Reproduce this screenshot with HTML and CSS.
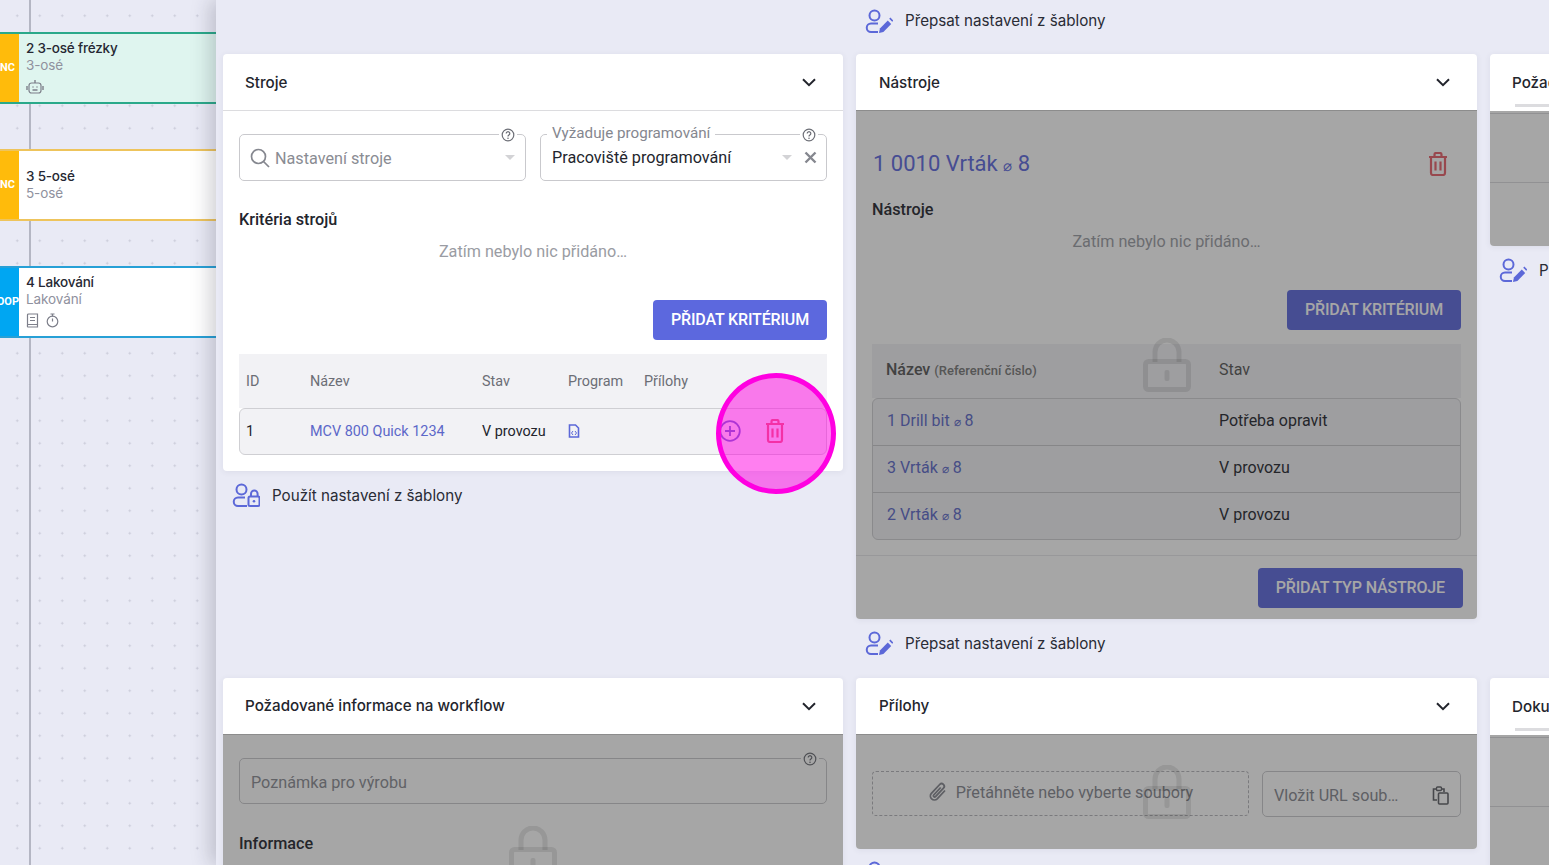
FILE: index.html
```html
<!DOCTYPE html>
<html lang="cs">
<head>
<meta charset="utf-8">
<title>Šablona</title>
<link rel="stylesheet" href="styles.css">
</head>
<body>
<svg class="defs" width="0" height="0" aria-hidden="true">
  <symbol id="i-edit" viewBox="0 0 28 24"><circle cx="9.500" cy="6.500" r="5" fill="none" stroke="currentColor" stroke-width="2"/><path d="M13 14.500H6a4.200 4.200 0 0 0 0 8.500h7" fill="none" stroke="currentColor" stroke-width="2"/><path d="M22.800 11.500l3.400 3.400-7.800 8-4.400 1 .9-4.400z" fill="currentColor"/><path d="M24.200 9.800l1.200-1.200 3 3-1.200 1.200z" fill="currentColor"/></symbol>
  <symbol id="i-lockuser" viewBox="0 0 28 24"><circle cx="9.500" cy="6.500" r="5" fill="none" stroke="currentColor" stroke-width="2"/><path d="M13 14.500H6a4.200 4.200 0 0 0 0 8.500h9" fill="none" stroke="currentColor" stroke-width="2"/><path d="M19 13v-2.200a3.300 3.300 0 0 1 6.600 0V13" fill="none" stroke="currentColor" stroke-width="2"/><rect x="16.500" y="13.500" width="11" height="9.500" rx="1.500" fill="none" stroke="currentColor" stroke-width="2"/><circle cx="22" cy="18.200" r="1.300" fill="currentColor"/></symbol>
  <symbol id="i-trash" viewBox="0 0 20 24"><path d="M1 5h18M6.500 5V2.500A1.500 1.500 0 0 1 8 1h4a1.500 1.500 0 0 1 1.500 1.500V5M3 5v16a2 2 0 0 0 2 2h10a2 2 0 0 0 2-2V5M7.500 9.500v9M12.500 9.500v9" fill="none" stroke="currentColor" stroke-width="2.200"/></symbol>
  <symbol id="i-chev" viewBox="0 0 14 9"><path d="M1 1.200l6 6 6-6" fill="none" stroke="currentColor" stroke-width="2"/></symbol>
  <symbol id="i-help" viewBox="0 0 14 14"><circle cx="7" cy="7" r="5.800" fill="none" stroke="currentColor" stroke-width="1.200"/><path d="M5.200 5.500a1.800 1.800 0 1 1 2.700 1.600c-.6.400-.9.700-.9 1.400" fill="none" stroke="currentColor" stroke-width="1.200"/><circle cx="7" cy="10.300" r=".8" fill="currentColor"/></symbol>
  <symbol id="i-lock" viewBox="0 0 48 54"><path d="M12 24V14a12 12 0 0 1 24 0v10" fill="none" stroke="currentColor" stroke-width="5"/><rect x="2.500" y="23.500" width="43" height="28" rx="3" fill="none" stroke="currentColor" stroke-width="5"/><rect x="21.500" y="32" width="5" height="11" rx="2" fill="currentColor"/></symbol>
</svg>

<div class="app">
  <aside class="canvas">
    <div class="wire"></div>
    <div class="node node-a">
      <div class="tag tag-yellow"><span>NC</span></div>
      <div class="node-body">
        <div class="node-title">2 3-osé frézky</div>
        <div class="node-sub">3-osé</div>
        <div class="node-icons">
          <svg class="glyph" width="18" height="15" viewBox="0 0 18 15"><rect x="3" y="4" width="12" height="10" rx="2.500" fill="none" stroke="currentColor" stroke-width="1.200"/><path d="M9 1v3M1 7v4M17 7v4" fill="none" stroke="currentColor" stroke-width="1.400"/><path d="M6.500 8h1M10.500 8h1M6.500 11h5" stroke="currentColor" stroke-width="1.400"/></svg>
        </div>
      </div>
    </div>
    <div class="node node-b">
      <div class="tag tag-yellow"><span>NC</span></div>
      <div class="node-body">
        <div class="node-title">3 5-osé</div>
        <div class="node-sub">5-osé</div>
      </div>
    </div>
    <div class="node node-c">
      <div class="tag tag-blue"><span>OOP</span></div>
      <div class="node-body">
        <div class="node-title">4 Lakování</div>
        <div class="node-sub">Lakování</div>
        <div class="node-icons">
          <svg class="glyph" width="13" height="15" viewBox="0 0 13 15"><path d="M1.500 12V2A1 1 0 0 1 2.500 1h9v13h-9a1 1 0 0 1-1-1.500zM1.800 11.500h9.700M4 4.500h5M4 7.500h5" fill="none" stroke="currentColor" stroke-width="1.200"/></svg>
          <svg class="glyph" width="13" height="15" viewBox="0 0 13 15"><circle cx="6.500" cy="8.500" r="5.300" fill="none" stroke="currentColor" stroke-width="1.200"/><path d="M4.500 1h4M6.500 1v2.500M6.500 5.500v3" fill="none" stroke="currentColor" stroke-width="1.200"/></svg>
        </div>
      </div>
    </div>
  </aside>

  <main class="main">
    <div class="grid">
      <div></div>
      <div class="caption caption-top"><svg class="cap-icon"><use href="#i-edit"/></svg><span>Přepsat nastavení z šablony</span></div>
      <div></div>

      <section class="cell">
        <div class="card">
          <header class="card-head card-head-open"><h2>Stroje</h2><svg class="chev"><use href="#i-chev"/></svg></header>
          <div class="card-body body-stroje">
            <div class="inputs">
              <div class="field">
                <svg class="search" width="20" height="20" viewBox="0 0 20 20"><circle cx="8.500" cy="8.500" r="7" fill="none" stroke="currentColor" stroke-width="1.700"/><path d="M13.500 13.500l5.500 5.500" stroke="currentColor" stroke-width="1.700"/></svg>
                <span class="placeholder">Nastavení stroje</span>
                <span class="caret caret-end"></span>
                <span class="help"><svg class="help-icon"><use href="#i-help"/></svg></span>
              </div>
              <div class="field">
                <span class="legend">Vyžaduje programování</span>
                <span class="value">Pracoviště programování</span>
                <span class="caret"></span>
                <svg class="clear" width="13" height="13" viewBox="0 0 13 13"><path d="M1.500 1.500l10 10M11.500 1.500l-10 10" stroke="currentColor" stroke-width="2.400"/></svg>
                <span class="help"><svg class="help-icon"><use href="#i-help"/></svg></span>
              </div>
            </div>
            <h3 class="sub sub-krit">Kritéria strojů</h3>
            <p class="empty">Zatím nebylo nic přidáno…</p>
            <div class="actions"><button class="btn">PŘIDAT KRITÉRIUM</button></div>
            <div class="thead machine-cols">
              <span>ID</span><span>Název</span><span>Stav</span><span>Program</span><span>Přílohy</span>
            </div>
            <div class="tbox">
              <div class="trow machine-cols">
                <span>1</span>
                <a class="link">MCV 800 Quick 1234</a>
                <span>V provozu</span>
                <svg class="file" width="12" height="14" viewBox="0 0 12 14"><path d="M1.500 1h6l3 3v9h-9z" fill="none" stroke="currentColor" stroke-width="1.600"/><path d="M5 7L3.500 9 5 11M7 7l1.500 2L7 11" fill="none" stroke="currentColor" stroke-width="1"/></svg>
                <span></span>
                <span class="row-actions">
                  <svg class="plus" width="22" height="22" viewBox="0 0 22 22"><circle cx="11" cy="11" r="9.800" fill="none" stroke="currentColor" stroke-width="1.800"/><path d="M11 6v10M6 11h10" stroke="currentColor" stroke-width="1.800"/></svg>
                  <svg class="trash trash-sm"><use href="#i-trash"/></svg>
                </span>
              </div>
            </div>
          </div>
        </div>
        <div class="caption"><svg class="cap-icon"><use href="#i-lockuser"/></svg><span>Použít nastavení z šablony</span></div>
      </section>

      <section class="cell cell-mid">
        <div class="card">
          <header class="card-head card-head-open card-head-locked"><h2>Nástroje</h2><svg class="chev"><use href="#i-chev"/></svg></header>
          <div class="card-body body-nastroje">
            <div class="tool-head"><a class="tool-title">1 0010 Vrták <small>⌀</small> 8</a><svg class="trash trash-lg"><use href="#i-trash"/></svg></div>
            <h3 class="sub">Nástroje</h3>
            <p class="empty empty-tool">Zatím nebylo nic přidáno…</p>
            <div class="actions"><button class="btn">PŘIDAT KRITÉRIUM</button></div>
            <div class="thead tool-cols"><span><b>Název</b> <small>(Referenční číslo)</small></span><span>Stav</span></div>
            <div class="tbox">
              <div class="trow tool-cols"><a class="link">1 Drill bit <small>⌀</small> 8</a><span>Potřeba opravit</span></div>
              <div class="trow tool-cols"><a class="link">3 Vrták <small>⌀</small> 8</a><span>V provozu</span></div>
              <div class="trow tool-cols"><a class="link">2 Vrták <small>⌀</small> 8</a><span>V provozu</span></div>
            </div>
            <div class="foot"><button class="btn">PŘIDAT TYP NÁSTROJE</button></div>
            <div class="locked"><svg class="lock"><use href="#i-lock"/></svg></div>
          </div>
        </div>
        <div class="caption"><svg class="cap-icon"><use href="#i-edit"/></svg><span>Přepsat nastavení z šablony</span></div>
      </section>

      <section class="cell">
        <div class="card">
          <header class="card-head card-head-bar"><h2>Požadované informace</h2></header>
          <div class="card-body body-third">
            <div class="third-row"></div>
            <div class="third-row"></div>
            <div class="locked"></div>
          </div>
        </div>
        <div class="caption"><svg class="cap-icon"><use href="#i-edit"/></svg><span>Přepsat nastavení z šablony</span></div>
      </section>

      <section class="cell">
        <div class="card">
          <header class="card-head card-head-locked"><h2>Požadované informace na workflow</h2><svg class="chev"><use href="#i-chev"/></svg></header>
          <div class="card-body body-info">
            <div class="field field-wide">
              <span class="placeholder">Poznámka pro výrobu</span>
              <span class="help"><svg class="help-icon"><use href="#i-help"/></svg></span>
            </div>
            <h3 class="sub sub-info">Informace</h3>
            <div class="locked"><svg class="lock"><use href="#i-lock"/></svg></div>
          </div>
        </div>
      </section>

      <section class="cell cell-mid">
        <div class="card">
          <header class="card-head card-head-locked"><h2>Přílohy</h2><svg class="chev"><use href="#i-chev"/></svg></header>
          <div class="card-body body-files">
            <div class="drop">
              <svg class="clip" width="20" height="22" viewBox="0 0 20 22"><path d="M17 9.500l-7.800 8.300a4 4 0 0 1-5.800-5.500l8.300-8.800a2.600 2.600 0 0 1 3.800 3.600l-8 8.500a1.200 1.200 0 0 1-1.800-1.600l7-7.500" fill="none" stroke="currentColor" stroke-width="1.800"/></svg>
              <span>Přetáhněte nebo vyberte soubory</span>
            </div>
            <div class="url">
              <span>Vložit URL soub…</span>
              <svg class="paste" width="17" height="19" viewBox="0 0 17 19"><path d="M5 14H1.500V3H4M10 3h2v3" fill="none" stroke="currentColor" stroke-width="1.600"/><rect x="4.500" y="1" width="5" height="3.500" rx="1" fill="none" stroke="currentColor" stroke-width="1.400"/><rect x="6.500" y="7" width="9.500" height="11" rx="1" fill="none" stroke="currentColor" stroke-width="1.600"/></svg>
            </div>
            <div class="locked"><svg class="lock"><use href="#i-lock"/></svg></div>
          </div>
        </div>
        <div class="caption"><svg class="cap-icon"><use href="#i-edit"/></svg><span>Přepsat nastavení z šablony</span></div>
      </section>

      <section class="cell">
        <div class="card">
          <header class="card-head card-head-bar"><h2>Dokumenty</h2></header>
          <div class="card-body body-third">
            <div class="third-row"></div>
            <div class="third-row"></div>
            <div class="locked"></div>
          </div>
        </div>
      </section>
    </div>
  </main>
  <div class="spot"></div>
</div>
</body>
</html>
```
FILE: styles.css
```css
* { box-sizing: border-box; }
html, body { margin: 0; height: 100%; overflow: hidden; }
body { font-family: "Roboto", "Liberation Sans", sans-serif; color: #23252d; background: #e9eaf5; }
.defs { position: absolute; }
.app { position: relative; display: flex; width: 1549px; height: 865px; overflow: hidden; background: #e9eaf5; }

/* canvas */
.canvas {
  position: relative; flex: 0 0 216px; height: 100%; overflow: hidden;
  background-color: #e9eaf5;
  background-image: radial-gradient(circle, #c9cbd8 0.9px, transparent 1.2px);
  background-size: 22.5px 22.5px;
  background-position: 6px 4.500px;
}
.wire { position: absolute; left: 29px; top: 0; bottom: 0; width: 2px; background: #b4b6c3; }
.node { position: absolute; left: 0; width: 216px; height: 72px; display: flex; border-top: 2px solid; border-bottom: 2px solid; background: #fff; }
.node-a { top: 32px; border-color: #2aa98a; background: #dff5ef; }
.node-b { top: 149px; border-color: #eec45c; }
.node-c { top: 266px; border-color: #27a0d6; }
.tag { flex: 0 0 19px; display: flex; align-items: center; justify-content: flex-end; overflow: hidden; padding-bottom: 2px; color: #fff; font: 700 11px/1 "Roboto", sans-serif; }
.tag span { flex: none; }
.tag-yellow { background: #ffbb0b; padding-right: 4px; }
.tag-blue { background: #00a6f2; }
.node-body { padding: 5px 0 0 7px; display: flex; flex-direction: column; }
.node-title { font: 500 13.500px/18px "Inter", sans-serif; letter-spacing: -.2px; color: #262833; }
.node-sub { font: 400 13.500px/17px "Inter", sans-serif; letter-spacing: -.1px; color: #8f919e; }
.node-b .node-body { padding: 0 0 2px 7px; justify-content: center; }
.node-icons { display: flex; gap: 7px; height: 20px; align-items: center; color: #7d7f8a; margin-top: 2px; }
.glyph { display: block; }

/* main */
.main { position: relative; flex: 1; min-width: 0; height: 100%; overflow: hidden; padding: 10px 0 0 7px; box-shadow: -6px 0 18px rgba(40, 40, 60, .22); background: #e9eaf5; }
.grid { display: grid; grid-template-columns: 620px 621px 620px; column-gap: 13px; row-gap: 24px; align-items: start; }
.card { background: #fff; border-radius: 4px; overflow: hidden; box-shadow: 0 1px 6px rgba(60, 60, 90, .08); }
.card-head { height: 57px; display: flex; align-items: center; justify-content: space-between; padding: 0 27px 0 22px; border-bottom: 1px solid #dcdcdf; }
.cell-mid .card-head { padding-left: 23px; }
.card-head h2 { margin: 0; font: 500 15.200px/20px "Inter", sans-serif; color: #23252d; white-space: nowrap; }
.card-head-open h2 { padding-top: 1px; }
.card-head-locked { border-bottom-color: #8c8c8c; }
.card-head-bar { position: relative; border: 0; }
.card-head-bar::after { content: ""; position: absolute; left: 25px; right: 0; bottom: 4px; height: 3px; background: #dcdcdf; }
.chev { width: 14px; height: 9px; color: #23252d; }
.card-body { position: relative; padding: 0 16px; }
.locked { position: absolute; inset: 0; background: rgba(38, 38, 38, .41); display: flex; align-items: center; justify-content: center; }
.lock { width: 48px; height: 54px; color: rgba(0, 0, 0, .09); }

/* stroje */
.body-stroje { height: 360px; padding: 23px 16px 0; }
.inputs { display: grid; grid-template-columns: 287px 287px; gap: 14px; }
.field { position: relative; height: 47px; border: 1px solid #c9c9cd; border-radius: 5px; display: flex; align-items: center; padding: 0 11px; font-size: 16.200px; }
.search { color: #85878f; margin: 0 5px 0 -1px; flex: none; }
.placeholder { color: #8a8c93; flex: 1; padding-top: 1px; }
.value { color: #23252d; flex: 1; }
.caret { flex: none; width: 0; height: 0; border-left: 5px solid transparent; border-right: 5px solid transparent; border-top: 5px solid #d3d3d6; }
.caret-end { margin-right: -1px; }
.clear { color: #85878f; flex: none; margin-left: 12px; margin-right: -2px; }
.help { position: absolute; right: 8px; top: -8px; width: 18px; height: 16px; background: #fff; display: flex; justify-content: center; align-items: center; color: #6d6f77; }
.help-icon { width: 14px; height: 14px; }
.legend { position: absolute; left: 6px; top: -11px; padding: 0 5px; background: #fff; color: #85878f; font-size: 15.200px; line-height: 18px; }
.sub { margin: 0; font: 500 16.200px/20px "Roboto", sans-serif; color: #23252d; }
.sub-krit { margin-top: 29px; }
.empty { margin: 12px 0 0; height: 20px; text-align: center; font-size: 16.200px; line-height: 20px; color: #9a9ca3; }
.actions { display: flex; justify-content: flex-end; margin-top: 38px; }
.btn { height: 40px; border: 0; border-radius: 4px; padding: 0 18px; background: #5c68de; color: #fff; font: 500 16px/1 "Roboto", sans-serif; letter-spacing: -.15px; }
.thead { margin-top: 14px; height: 54px; background: #f2f2f5; display: grid; align-items: center; font-size: 14.400px; color: #6c6e76; }
.machine-cols { grid-template-columns: 64px 172px 86px 76px 75px 1fr; padding-left: 7px; }
.tbox { border: 1px solid #cfcfd3; border-radius: 6px; background: #f2f2f5; overflow: hidden; }
.trow { display: grid; align-items: center; height: 45px; font-size: 14.400px; color: #23252d; }
.machine-cols.trow { padding-left: 6px; }
.link { color: #5c68c9; }
.file { color: #5c68d8; margin-top: -1px; }
.row-actions { display: flex; align-items: center; gap: 24px; grid-column: 6; margin-top: -2px; }
.plus { color: #5c68c9; flex: none; }
.trash { color: #e8606a; flex: none; }
.trash-sm { width: 20px; height: 24px; }
.trash-lg { width: 20px; height: 24px; }

/* nástroje */
.body-nastroje { height: 508px; }
.tool-head { height: 89px; padding: 18px 13px 0 1px; display: flex; align-items: center; justify-content: space-between; }
.tool-title { font-size: 22px; line-height: 28px; color: #5c68de; }
.tool-title small { font-size: 15px; }
.trash-lg { margin-top: -2px; }
.empty-tool { margin-top: 12px; }
.tool-cols { grid-template-columns: 333px 1fr; padding-left: 14px; font-size: 16px; }
.thead.tool-cols { color: #555; padding-bottom: 3px; }
.thead.tool-cols b { font-weight: 500; }
.thead.tool-cols small { font-size: 13px; font-weight: 500; color: #777; }
.tool-cols.trow { height: 47px; font-size: 16px; padding-bottom: 4px; border-bottom: 1px solid #c9c9cd; grid-template-columns: 332px 1fr; }
.tool-cols.trow:last-child { border-bottom: 0; }
.tool-cols small { font-size: 12px; }
.body-nastroje .tbox { height: 142px; }
.foot { position: absolute; left: 0; right: 0; bottom: 0; height: 64px; border-top: 1px solid #e7e7ea; display: flex; align-items: center; justify-content: flex-end; padding: 0 14px 0 0; }

/* third column */
.body-third { height: 135px; padding: 2px 0 0; }
.third-row { height: 69px; border-top: 1px solid #dcdcdf; }

/* info */
.body-info { height: 236px; padding-top: 23px; }
.field-wide { height: 46px; }
.field-wide .help { right: 7px; }
.field-wide .placeholder { padding-top: 2px; }
.sub-info { margin-top: 30px; }

/* přílohy */
.body-files { height: 114px; padding-top: 36px; display: grid; grid-template-columns: 377px 199px; column-gap: 13px; align-items: start; }
.drop { height: 45px; border: 1px dashed #b5b5ba; border-radius: 4px; display: flex; align-items: center; justify-content: center; gap: 8px; color: #85878f; font-size: 16.200px; padding-bottom: 3px; }
.clip { color: #85878f; }
.url { height: 46px; border: 1px solid #c9c9cd; border-radius: 5px; display: flex; align-items: center; justify-content: space-between; padding: 2px 11px 0; color: #85878f; font-size: 16.200px; }
.paste { color: #5e6066; }

/* caption */
.caption { display: flex; align-items: center; gap: 12px; height: 22px; padding-left: 9px; margin-top: 13px; font: 400 15.200px/22px "Inter", sans-serif; color: #2a2c36; white-space: nowrap; }
.caption span { padding-top: 2px; }
.caption-top { margin-top: 0; margin-bottom: -2px; }
.caption-top span { padding-top: 0; }
.cap-icon { width: 28px; height: 24px; color: #5c68d8; flex: none; }

/* highlight */
.spot { position: absolute; left: 716px; top: 373px; width: 120px; height: 121px; border-radius: 50%; border: 5px solid #ff00e1; background: rgba(255, 0, 225, .5); }
```
